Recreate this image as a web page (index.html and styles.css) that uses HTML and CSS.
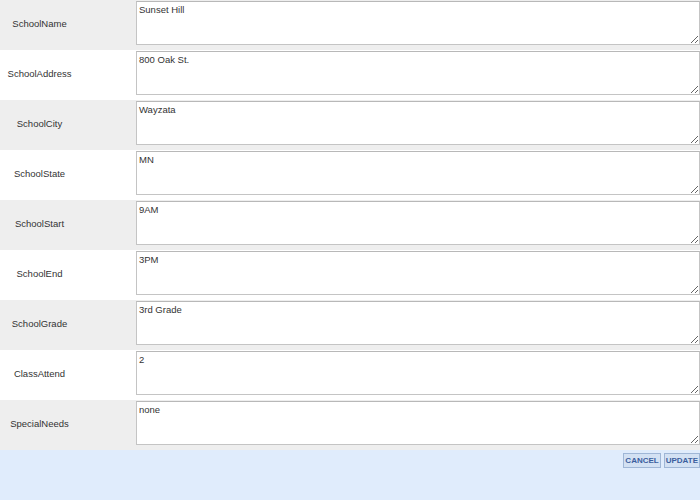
FILE: index.html
```html
<!DOCTYPE html>
<html lang="en">
<head>
  <meta charset="UTF-8">
  <title>School Record</title>
  <link rel="stylesheet" href="styles.css">
</head>
<body>

  <div class="form">
    <div class="row alt">
      <label class="label" for="schoolName">SchoolName</label>
      <textarea id="schoolName" class="field">Sunset Hill</textarea>
    </div>
    <div class="row">
      <label class="label" for="schoolAddress">SchoolAddress</label>
      <textarea id="schoolAddress" class="field">800 Oak St.</textarea>
    </div>
    <div class="row alt">
      <label class="label" for="schoolCity">SchoolCity</label>
      <textarea id="schoolCity" class="field">Wayzata</textarea>
    </div>
    <div class="row">
      <label class="label" for="schoolState">SchoolState</label>
      <textarea id="schoolState" class="field">MN</textarea>
    </div>
    <div class="row alt">
      <label class="label" for="schoolStart">SchoolStart</label>
      <textarea id="schoolStart" class="field">9AM</textarea>
    </div>
    <div class="row">
      <label class="label" for="schoolEnd">SchoolEnd</label>
      <textarea id="schoolEnd" class="field">3PM</textarea>
    </div>
    <div class="row alt">
      <label class="label" for="schoolGrade">SchoolGrade</label>
      <textarea id="schoolGrade" class="field">3rd Grade</textarea>
    </div>
    <div class="row">
      <label class="label" for="classAttend">ClassAttend</label>
      <textarea id="classAttend" class="field">2</textarea>
    </div>
    <div class="row alt">
      <label class="label" for="specialNeeds">SpecialNeeds</label>
      <textarea id="specialNeeds" class="field">none</textarea>
    </div>

    <div class="actions">
      <button type="button" class="btn">CANCEL</button>
      <button type="button" class="btn">UPDATE</button>
    </div>
  </div>

</body>
</html>
```

FILE: styles.css
```css
body {
  margin: 0;
  font-family: "Liberation Sans", Arial, sans-serif;
  font-size: 9.5px;
  color: #333;
  background-color: #e0ecfc;
}

.form {
  width: 700px;
}

.row {
  display: flex;
  align-items: flex-start;
  height: 50px;
  background-color: #fff;
}

.row.alt {
  background-color: #eeeeee;
}

.label {
  width: 79px;
  margin-right: 57px;
  line-height: 48px;
  text-align: center;
}

.field {
  box-sizing: border-box;
  width: 564px;
  height: 44px;
  margin: 1px 0 0 0;
  padding: 2px;
  border: 1px solid #c4c4c4;
  border-top-color: #b8b8b8;
  font-family: "Liberation Sans", Arial, sans-serif;
  font-size: 9.5px;
  color: #333;
  background-color: #fff;
  resize: vertical;
}

.actions {
  display: flex;
  justify-content: flex-end;
  gap: 3px;
  padding: 3px 0 0 0;
  height: 47px;
  box-sizing: border-box;
}

.btn {
  height: 15px;
  padding: 0 1px;
  font-family: "Liberation Sans", Arial, sans-serif;
  font-size: 8px;
  font-weight: bold;
  color: #3b5e9e;
  background-color: #d3e1f3;
  border: 1px solid #9fb6d6;
  cursor: pointer;
}
```
